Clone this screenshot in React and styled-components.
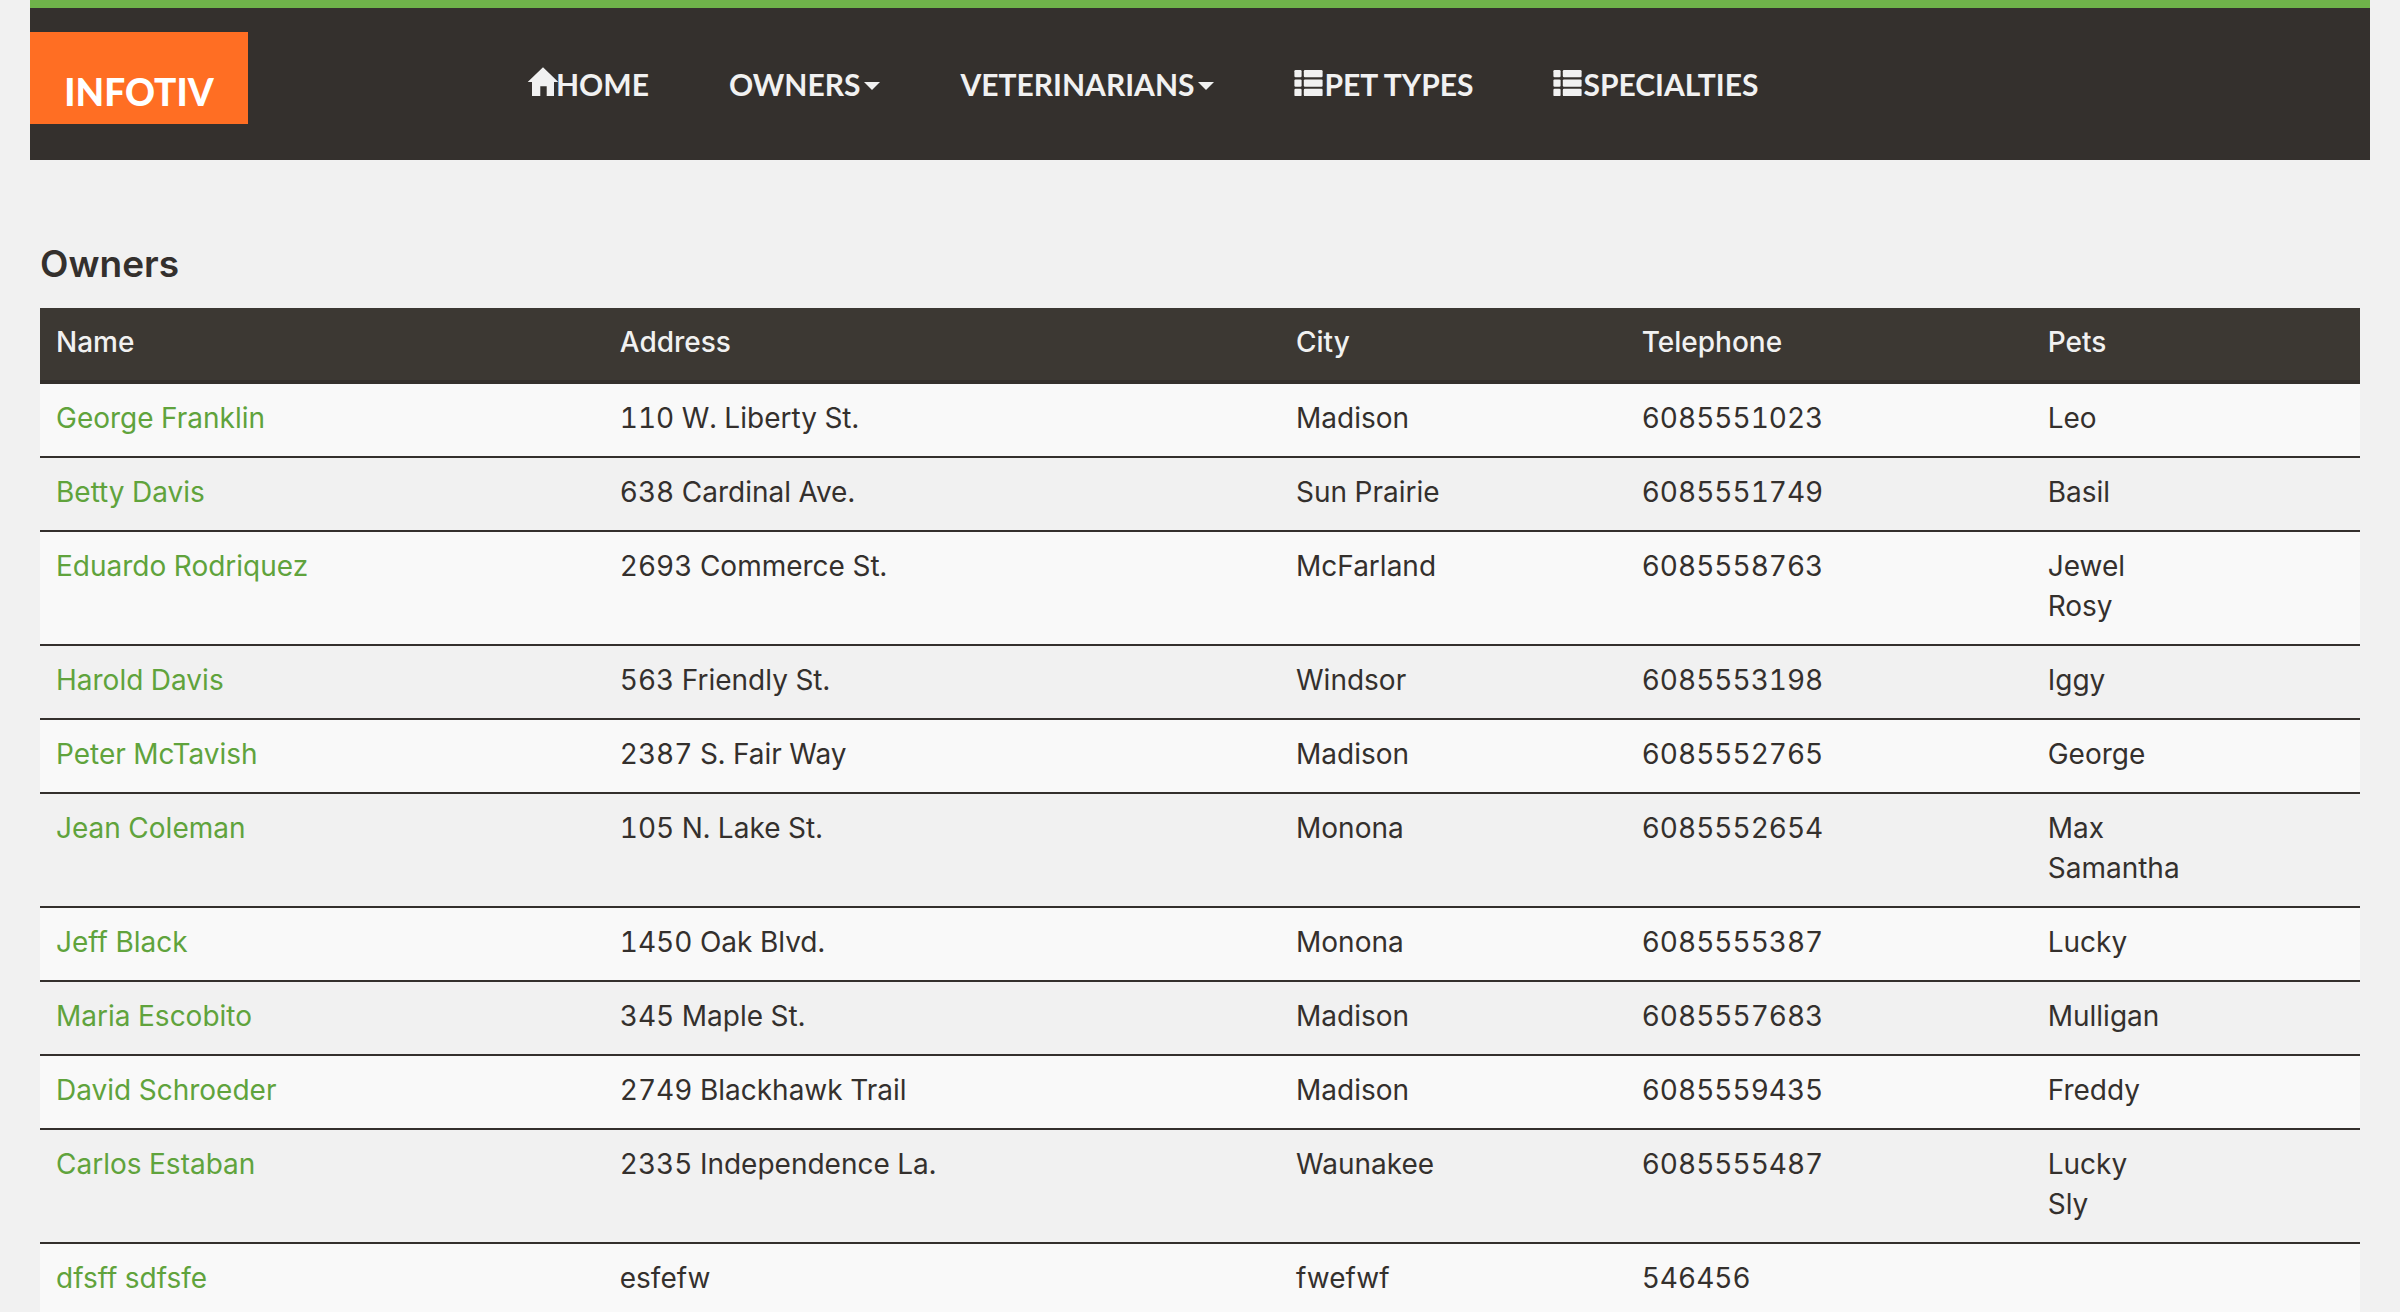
import React from "react";
import styled, { createGlobalStyle } from "styled-components";

const colors = {
  page: "#f1f1f1",
  dark: "#34302d",
  head: "#3c3833",
  green: "#6fb34a",
  link: "#60a33c",
  stripe: "#f9f9f9",
  orange: "#ff6e23",
};

const GlobalStyle = createGlobalStyle`
  *, *::before, *::after { box-sizing: border-box; }
  body {
    margin: 0;
    background: ${colors.page};
    color: ${colors.dark};
    font-family: Inter, "Open Sans", sans-serif;
    font-size: 28px;
    line-height: 40px;
  }
`;

const Page = styled.div`
  height: 100vh;
  overflow: hidden;
  padding: 0 30px;
`;

const Navbar = styled.header`
  display: flex;
  align-items: center;
  gap: 280px;
  height: 160px;
  border-top: 8px solid ${colors.green};
  background: ${colors.dark};
`;

const Logo = styled.a`
  display: flex;
  flex: none;
  align-self: flex-start;
  align-items: center;
  justify-content: center;
  width: 218px;
  height: 92px;
  margin-top: 24px;
  padding-top: 28px;
  background: ${colors.orange};
  color: #fff;
  font-family: Lato, sans-serif;
  font-size: 37px;
  font-weight: 900;
  text-decoration: none;
`;

const Menu = styled.ul`
  display: flex;
  align-items: center;
  gap: 80px;
  margin: 0;
  padding: 0;
  list-style: none;
`;

const MenuItem = styled.a`
  display: flex;
  align-items: center;
  padding: 0;
  border: 0;
  background: none;
  color: ${colors.page};
  font-family: Lato, sans-serif;
  font-size: 30px;
  font-weight: 700;
  line-height: 40px;
  text-decoration: none;
  text-transform: uppercase;
  white-space: nowrap;
  cursor: pointer;
`;

const Caret = styled.span`
  margin: 4px 0 0 4px;
  border-top: 8px solid currentColor;
  border-right: 8px solid transparent;
  border-left: 8px solid transparent;
`;

const Icon = styled.svg`
  flex: none;
  width: ${(p) => p.width}px;
  height: 34px;
  overflow: visible;
  fill: currentColor;
`;

const Content = styled.main`
  padding: 84px 10px 0;
`;

const Title = styled.h2`
  margin: 0 0 24px;
  font-size: 37px;
  font-weight: 600;
  line-height: 40px;
`;

const Table = styled.table`
  width: 100%;
  border-collapse: separate;
  border-spacing: 0;
  table-layout: fixed;
  font-variant-numeric: tabular-nums;
`;

const Col = styled.col`
  width: ${(p) => p.$share}%;
`;

const HeadCell = styled.th`
  padding: 14px 16px 18px;
  border-bottom: 4px solid ${colors.dark};
  background: ${colors.head};
  color: ${colors.page};
  font-weight: 500;
  text-align: left;
`;

const Row = styled.tr`
  &:nth-child(odd) {
    background: ${colors.stripe};
  }
`;

const Cell = styled.td`
  padding: 14px 16px 18px;
  border-bottom: 2px solid ${colors.dark};
  vertical-align: top;
`;

const OwnerLink = styled.a`
  color: ${colors.link};
  text-decoration: none;
`;

const Pet = styled.div``;

const HomeIcon = () => (
  <Icon width="28" viewBox="0 0 28 34" aria-hidden="true">
    <path d="M15 0.3 L30.3 14.9 H26 V29 H18.7 V19.3 H12.3 V29 H4 V14.9 H-0.3 Z" />
  </Icon>
);

const ListIcon = () => (
  <Icon width="30" viewBox="0 0 30 34" aria-hidden="true">
    {[3, 12.4, 21.8].map((y) => (
      <React.Fragment key={y}>
        <rect x="0.4" y={y} width="7.2" height="7.3" rx="1.2" />
        <rect x="9.8" y={y} width="18.8" height="7.3" rx="1.2" />
      </React.Fragment>
    ))}
  </Icon>
);

const columns = [
  ["Name", 24.3],
  ["Address", 29.15],
  ["City", 14.9],
  ["Telephone", 17.5],
  ["Pets", 14.15],
];

const owners = [
  ["George Franklin", "110 W. Liberty St.", "Madison", "6085551023", ["Leo"]],
  ["Betty Davis", "638 Cardinal Ave.", "Sun Prairie", "6085551749", ["Basil"]],
  ["Eduardo Rodriquez", "2693 Commerce St.", "McFarland", "6085558763", ["Jewel", "Rosy"]],
  ["Harold Davis", "563 Friendly St.", "Windsor", "6085553198", ["Iggy"]],
  ["Peter McTavish", "2387 S. Fair Way", "Madison", "6085552765", ["George"]],
  ["Jean Coleman", "105 N. Lake St.", "Monona", "6085552654", ["Max", "Samantha"]],
  ["Jeff Black", "1450 Oak Blvd.", "Monona", "6085555387", ["Lucky"]],
  ["Maria Escobito", "345 Maple St.", "Madison", "6085557683", ["Mulligan"]],
  ["David Schroeder", "2749 Blackhawk Trail", "Madison", "6085559435", ["Freddy"]],
  ["Carlos Estaban", "2335 Independence La.", "Waunakee", "6085555487", ["Lucky", "Sly"]],
  ["dfsff sdfsfe", "esfefw", "fwefwf", "546456", []],
];

export default function App() {
  return (
    <Page>
      <GlobalStyle />
      <Navbar>
        <Logo href="#">INFOTIV</Logo>
        <nav>
          <Menu>
            <li><MenuItem href="#"><HomeIcon />Home</MenuItem></li>
            <li><MenuItem as="button" type="button" aria-haspopup="true">Owners<Caret /></MenuItem></li>
            <li><MenuItem as="button" type="button" aria-haspopup="true">Veterinarians<Caret /></MenuItem></li>
            <li><MenuItem href="#"><ListIcon />Pet Types</MenuItem></li>
            <li><MenuItem href="#"><ListIcon />Specialties</MenuItem></li>
          </Menu>
        </nav>
      </Navbar>
      <Content>
        <Title>Owners</Title>
        <Table>
          <colgroup>
            {columns.map(([name, share]) => (
              <Col key={name} $share={share} />
            ))}
          </colgroup>
          <thead>
            <tr>
              {columns.map(([name]) => (
                <HeadCell key={name} scope="col">{name}</HeadCell>
              ))}
            </tr>
          </thead>
          <tbody>
            {owners.map(([name, address, city, phone, pets]) => (
              <Row key={name}>
                <Cell><OwnerLink href="#">{name}</OwnerLink></Cell>
                <Cell>{address}</Cell>
                <Cell>{city}</Cell>
                <Cell>{phone}</Cell>
                <Cell>
                  {pets.map((pet) => (
                    <Pet key={pet}>{pet}</Pet>
                  ))}
                </Cell>
              </Row>
            ))}
          </tbody>
        </Table>
      </Content>
    </Page>
  );
}
